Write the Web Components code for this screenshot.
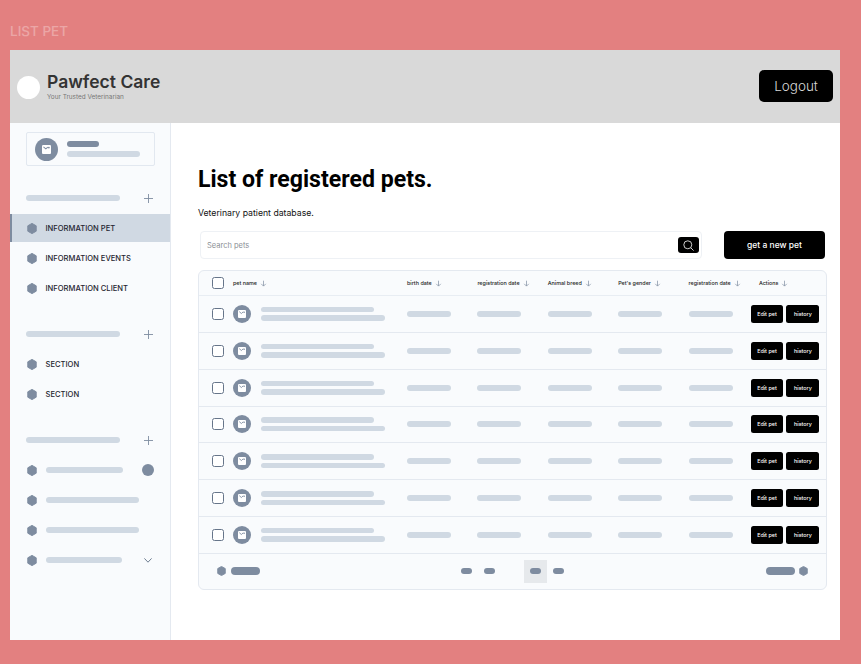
<!DOCTYPE html>
<html>
<head>
<meta charset="utf-8">
<title>List pet</title>
<style>
  html, body { margin: 0; height: 100%; }
  body { background: #e38080; font-family: Inter, "Liberation Sans", sans-serif; overflow: hidden; }
</style>
</head>
<body>
<pet-page></pet-page>

<script>
const HEX = `<svg viewBox="0 0 10 11" width="100%" height="100%" style="display:block"><path d="M5 .4 9.2 2.8v5.4L5 10.6.8 8.2V2.8z" fill="#7e8ca0" stroke="#7e8ca0" stroke-linejoin="round"/></svg>`;
const ARROW = `<svg viewBox="0 0 8 8" width="7" height="7" style="display:block"><path d="M4 .8v6M1.4 4.4 4 7l2.6-2.6" fill="none" stroke="#7e8ca0" stroke-width=".8"/></svg>`;

class SkBar extends HTMLElement {
  constructor() {
    super();
    this.root = this.attachShadow({ mode: 'open' });
    this.root.innerHTML = `<style>
      :host { display: block; height: 6px; width: 44px; border-radius: 3px; background: #d0d9e3; flex: none; }
      :host([dark]) { background: #7e8ca0; }
    </style>`;
  }
}
customElements.define('sk-bar', SkBar);

class PetAvatar extends HTMLElement {
  constructor() {
    super();
    this.root = this.attachShadow({ mode: 'open' });
    this.root.innerHTML = `<style>
      :host { display: flex; align-items: center; justify-content: center; width: 18px; height: 18px; border-radius: 50%; background: #7e8ca0; flex: none; }
      :host([big]) { width: 23px; height: 23px; }
      svg { width: 8px; height: 8px; display: block; }
      :host([big]) svg { width: 9px; height: 9px; }
    </style>
    <svg viewBox="0 0 8 8"><path d="M1 0h6a1 1 0 0 1 1 1v6a1 1 0 0 1-1 1H1a1 1 0 0 1-1-1V1a1 1 0 0 1 1-1z" fill="#fff"/><path d="M1.3 1.7 3.4 3.5 5.2 1.8" fill="none" stroke="#7e8ca0" stroke-width=".9"/><circle cx="6.1" cy="2.3" r=".8" fill="#7e8ca0"/></svg>`;
  }
}
customElements.define('pet-avatar', PetAvatar);

class NavItem extends HTMLElement {
  constructor() {
    super();
    this.root = this.attachShadow({ mode: 'open' });
    this.root.innerHTML = `<style>
      :host { display: flex; align-items: center; height: 28px; margin-bottom: 2px; padding: 0 16px 0 17px; gap: 8.5px; box-sizing: border-box;
        font-size: 7.6px; font-weight: 500; color: #1f2530; white-space: nowrap; }
      :host([active]) { background: #d0d9e3; box-shadow: inset 2px 0 0 #7e8ca0; }
      .hex { width: 10px; height: 11px; flex: none; }
      ::slotted(sk-bar) { margin-right: auto; }
    </style>
    <span class="hex">${HEX}</span><slot></slot><slot name="end"></slot>`;
  }
}
customElements.define('nav-item', NavItem);

class NavHead extends HTMLElement {
  constructor() {
    super();
    this.root = this.attachShadow({ mode: 'open' });
    this.root.innerHTML = `<style>
      :host { display: flex; align-items: center; justify-content: space-between; height: 6px; padding: 0 17px 0 16px; margin-bottom: 13px; }
      svg { width: 9px; height: 9px; display: block; }
    </style>
    <sk-bar style="width:94px"></sk-bar>
    <svg viewBox="0 0 9 9"><path d="M4.5 0v9M0 4.5h9" stroke="#7e8ca0" stroke-width=".9"/></svg>`;
  }
}
customElements.define('nav-head', NavHead);

class SideBar extends HTMLElement {
  constructor() {
    super();
    this.root = this.attachShadow({ mode: 'open' });
    this.root.innerHTML = `<style>
      :host { display: block; width: 161px; flex: none; box-sizing: border-box; background: #f9fbfd; border-right: 1px solid #e4e9f0; padding-top: 9px; }
      .card { display: flex; align-items: center; gap: 9px; margin: 0 15px 29px 16px; height: 34px; padding: 0 8px; box-sizing: border-box;
        border: 1px solid #e2e8f0; border-radius: 2px; }
      .lines { display: flex; flex-direction: column; gap: 4px; }
      .group { margin-bottom: 29px; }
      .chev { width: 8px; height: 5px; display: block; margin-right: 2px; }
      .dot { width: 12px; height: 12px; border-radius: 50%; background: #7e8ca0; }
    </style>
    <div class="card">
      <pet-avatar big></pet-avatar>
      <div class="lines"><sk-bar dark style="width:32px"></sk-bar><sk-bar style="width:73px"></sk-bar></div>
    </div>
    <div class="group">
      <nav-head></nav-head>
      <nav-item active>INFORMATION PET</nav-item>
      <nav-item>INFORMATION EVENTS</nav-item>
      <nav-item>INFORMATION CLIENT</nav-item>
    </div>
    <div class="group">
      <nav-head></nav-head>
      <nav-item>SECTION</nav-item>
      <nav-item>SECTION</nav-item>
    </div>
    <div class="group">
      <nav-head></nav-head>
      <nav-item><sk-bar style="width:77px"></sk-bar><span slot="end" class="dot"></span></nav-item>
      <nav-item><sk-bar style="width:93px"></sk-bar></nav-item>
      <nav-item><sk-bar style="width:93px"></sk-bar></nav-item>
      <nav-item><sk-bar style="width:76px"></sk-bar>
        <svg slot="end" class="chev" viewBox="0 0 8 5"><path d="M.4.4 4 4.2 7.6.4" fill="none" stroke="#5f6f85" stroke-width=".9"/></svg>
      </nav-item>
    </div>`;
  }
}
customElements.define('side-bar', SideBar);

const COLS = 'grid-template-columns: 21px 174px 70.4px 70.4px 70.4px 70.4px 62.4px 1fr;';

class PetHead extends HTMLElement {
  constructor() {
    super();
    this.root = this.attachShadow({ mode: 'open' });
    const labels = ['pet name', 'birth date', 'registration date', 'Animal breed', "Pet's gender", 'registration date', 'Actions'];
    const cells = labels.map((l, i) => `<div class="c" ${i === 6 ? 'style="padding-left:8px"' : ''}>${l}${ARROW}</div>`).join('');
    this.root.innerHTML = `<style>
      :host { display: grid; ${COLS} align-items: center; height: 25px; padding-left: 13px; box-sizing: border-box; border-bottom: 1px solid #e8edf3;
        font-size: 5.4px; font-weight: 500; color: #1a1a1a; }
      .c { display: flex; align-items: center; gap: 3px; white-space: nowrap; }
      .box { width: 12px; height: 12px; box-sizing: border-box; border: 1px solid #66758a; border-radius: 2.5px; background: #fff; }
    </style>
    <div class="box"></div>${cells}`;
  }
}
customElements.define('pet-head', PetHead);

class PetRow extends HTMLElement {
  constructor() {
    super();
    this.root = this.attachShadow({ mode: 'open' });
    this.root.innerHTML = `<style>
      :host { display: grid; ${COLS} align-items: center; height: 36.85px; padding-left: 13px; box-sizing: border-box; border-bottom: 1px solid #e4e9f0; }
      .box { width: 12px; height: 12px; box-sizing: border-box; border: 1px solid #66758a; border-radius: 2.5px; background: #fff; }
      .name { display: flex; align-items: center; gap: 10px; }
      .lines { display: flex; flex-direction: column; gap: 3px; }
      .lines sk-bar { height: 5.5px; }
      .actions { display: flex; gap: 3.5px; }
      .btn { display: flex; align-items: center; justify-content: center; height: 18px; background: #000; color: #fff; border-radius: 2.5px;
        font-size: 5.4px; font-weight: 500; flex: none; }
    </style>
    <div class="box"></div>
    <div class="name"><pet-avatar></pet-avatar><div class="lines"><sk-bar style="width:113px"></sk-bar><sk-bar style="width:124px"></sk-bar></div></div>
    <sk-bar></sk-bar><sk-bar></sk-bar><sk-bar></sk-bar><sk-bar></sk-bar><sk-bar></sk-bar>
    <div class="actions"><div class="btn" style="width:32px">Edit pet</div><div class="btn" style="width:33px">history</div></div>`;
  }
}
customElements.define('pet-row', PetRow);

class PetPager extends HTMLElement {
  constructor() {
    super();
    this.root = this.attachShadow({ mode: 'open' });
    this.root.innerHTML = `<style>
      :host { display: flex; align-items: center; height: 35px; padding: 0 18px; box-sizing: border-box; }
      .hex { width: 9px; height: 10px; flex: none; }
      .side { display: flex; align-items: center; gap: 5px; width: 48px; }
      .side.r { justify-content: flex-end; gap: 4px; }
      .side sk-bar { width: 29px; height: 8px; border-radius: 4px; }
      .mid { flex: 1; display: flex; align-items: center; padding-left: 196px; }
      .mid sk-bar { width: 11px; height: 6px; }
      .on { display: flex; align-items: center; justify-content: center; width: 23px; height: 23px; background: #e6e9ec; margin: 0 6px 0 29px; }
    </style>
    <div class="side"><span class="hex">${HEX}</span><sk-bar dark></sk-bar></div>
    <div class="mid">
      <sk-bar dark></sk-bar><sk-bar dark style="margin-left:12px"></sk-bar>
      <div class="on"><sk-bar dark></sk-bar></div><sk-bar dark></sk-bar>
    </div>
    <div class="side r"><sk-bar dark></sk-bar><span class="hex">${HEX}</span></div>`;
  }
}
customElements.define('pet-pager', PetPager);

class PetTable extends HTMLElement {
  constructor() {
    super();
    this.root = this.attachShadow({ mode: 'open' });
    this.root.innerHTML = `<style>
      :host { display: block; width: 629px; box-sizing: border-box; border: 1px solid #e4e9f0; border-radius: 6px; background: #f9fbfd; }
    </style>
    <pet-head></pet-head>
    ${'<pet-row></pet-row>'.repeat(7)}
    <pet-pager></pet-pager>`;
  }
}
customElements.define('pet-table', PetTable);

class PetMain extends HTMLElement {
  constructor() {
    super();
    this.root = this.attachShadow({ mode: 'open' });
    this.root.innerHTML = `<style>
      :host { display: block; flex: 1; background: #fff; padding: 42px 0 0 27px; box-sizing: border-box; }
      h1 { margin: 0; font: 700 23.1px/30px Roboto, "Liberation Sans", sans-serif; color: #000; }
      p { margin: 11px 0 0; font: 400 8.7px/14px Inter, "Liberation Sans", sans-serif; color: #111; }
      .tools { display: flex; align-items: center; margin: 11px 0 11px 2px; }
      .search { display: flex; align-items: center; justify-content: space-between; width: 502px; height: 28px; box-sizing: border-box;
        border: 1px solid #eef1f5; border-radius: 4px; padding: 0 2px 0 6px; font-size: 7.5px; color: #8b8f96; }
      .go { display: flex; align-items: center; justify-content: center; width: 21px; height: 16px; background: #000; border-radius: 3px; }
      .go svg { width: 11px; height: 11px; display: block; }
      .new { display: flex; align-items: center; justify-content: center; width: 101px; height: 28px; margin-left: 22px; background: #000; color: #fff;
        border-radius: 4px; font-size: 8.5px; font-weight: 500; }
    </style>
    <h1>List of registered pets.</h1>
    <p>Veterinary patient database.</p>
    <div class="tools">
      <div class="search">Search pets<span class="go"><svg viewBox="0 0 11 11"><circle cx="4.8" cy="4.8" r="4" fill="none" stroke="#fff" stroke-width=".8"/><path d="M7.8 7.8 10.6 10.6" stroke="#fff" stroke-width=".8"/></svg></span></div>
      <div class="new">get a new pet</div>
    </div>
    <pet-table></pet-table>`;
  }
}
customElements.define('pet-main', PetMain);

class TopBar extends HTMLElement {
  constructor() {
    super();
    this.root = this.attachShadow({ mode: 'open' });
    this.root.innerHTML = `<style>
      :host { display: flex; align-items: center; justify-content: space-between; height: 73px; background: #d9d9d9; padding: 0 7px; box-sizing: border-box; flex: none; }
      .brand { display: flex; align-items: center; gap: 7px; }
      .logo { width: 23px; height: 23px; border-radius: 50%; background: #fff; margin-top: 1px; }
      .name { font-size: 17.5px; line-height: 20px; font-weight: 600; color: #333; margin-top: -1px; }
      .tag { font-size: 6.4px; line-height: 8px; color: #777; margin-top: 1px; }
      .logout { display: flex; align-items: center; justify-content: center; width: 74px; height: 32px; background: #000; color: #d9d9d9; border-radius: 5px;
        font-size: 13.5px; font-weight: 300; margin-top: -1px; }
    </style>
    <div class="brand"><div class="logo"></div><div><div class="name">Pawfect Care</div><div class="tag">Your Trusted Veterinarian</div></div></div>
    <div class="logout">Logout</div>`;
  }
}
customElements.define('top-bar', TopBar);

class PetPage extends HTMLElement {
  constructor() {
    super();
    this.root = this.attachShadow({ mode: 'open' });
    this.root.innerHTML = `<style>
      :host { display: block; padding: 0 0 0 10px; }
      .label { height: 50px; line-height: 63px; font-size: 13.5px; font-weight: 500; color: #ffffff; opacity: .3; box-sizing: border-box; }
      .frame { display: flex; flex-direction: column; width: 830px; height: 590px; overflow: hidden; }
      .body { display: flex; flex: 1; min-height: 0; }
    </style>
    <div class="label">LIST PET</div>
    <div class="frame">
      <top-bar></top-bar>
      <div class="body"><side-bar></side-bar><pet-main></pet-main></div>
    </div>`;
  }
}
customElements.define('pet-page', PetPage);
</script>
</body>
</html>
